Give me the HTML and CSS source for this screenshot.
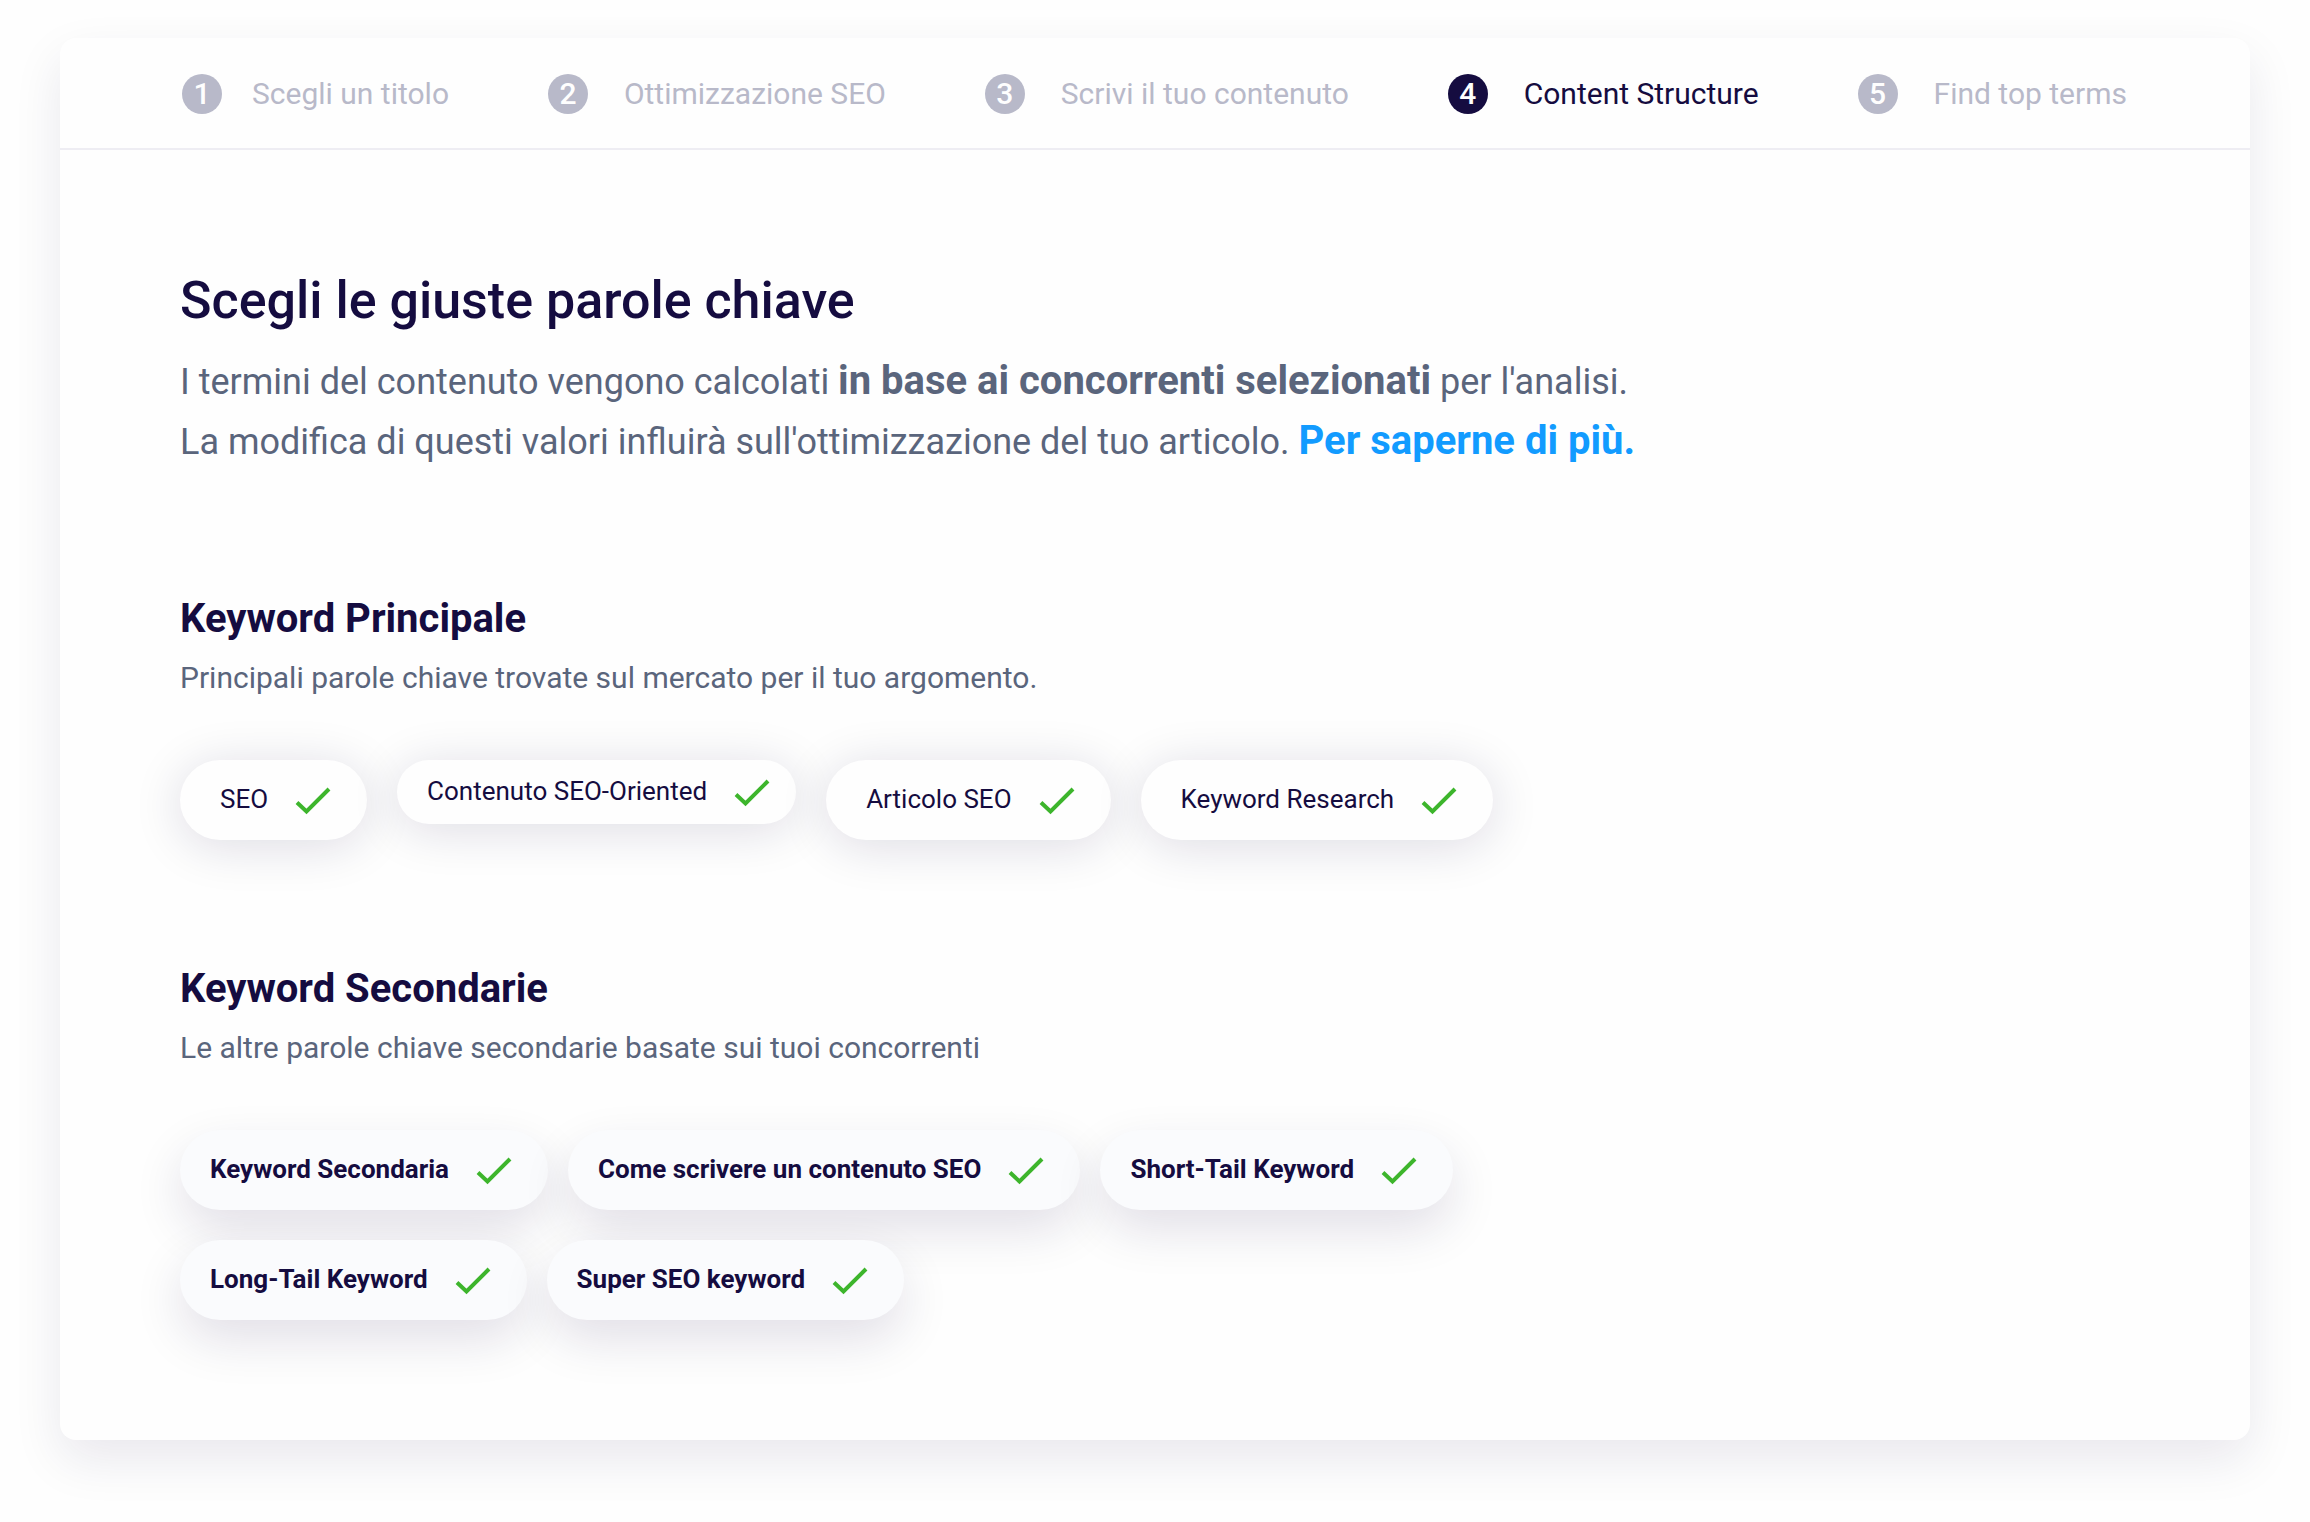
FILE: index.html
```html
<!DOCTYPE html>
<html lang="it">
  <head>
    <meta charset="UTF-8" />
    <meta name="viewport" content="width=device-width, initial-scale=1.0" />
    <title>Content Structure</title>
    <link rel="stylesheet" href="styles.css">
  </head>
  <body>
    <!-- check mark shared by all the keywords -->
    <svg class="sprite" aria-hidden="true">
      <symbol id="check" viewBox="0 0 36 28">
        <path d="M2 15.5 L11.5 24.5 L34 2" />
      </symbol>
    </svg>

    <main class="card">
      <nav class="steps">
        <a href="#titolo" class="step"><span class="number">1</span>Scegli un titolo</a>
        <a href="#seo" class="step"><span class="number">2</span>Ottimizzazione SEO</a>
        <a href="#contenuto" class="step"><span class="number">3</span>Scrivi il tuo contenuto</a>
        <a href="#structure" class="step active" aria-current="step"><span class="number">4</span>Content Structure</a>
        <a href="#terms" class="step"><span class="number">5</span>Find top terms</a>
      </nav>

      <div class="content">
        <h1>Scegli le giuste parole chiave</h1>
        <p class="intro">
          I termini del contenuto vengono calcolati <strong>in base ai concorrenti selezionati</strong> per l'analisi.<br>
          La modifica di questi valori influirà sull'ottimizzazione del tuo articolo. <a href="#info">Per saperne di più.</a>
        </p>

        <section class="group">
          <h2>Keyword Principale</h2>
          <p class="hint">Principali parole chiave trovate sul mercato per il tuo argomento.</p>
          <div class="keywords">
            <button type="button" class="keyword">SEO<svg class="check" aria-hidden="true"><use href="#check" /></svg></button>
            <button type="button" class="keyword small">Contenuto SEO-Oriented<svg class="check" aria-hidden="true"><use href="#check" /></svg></button>
            <button type="button" class="keyword">Articolo SEO<svg class="check" aria-hidden="true"><use href="#check" /></svg></button>
            <button type="button" class="keyword">Keyword Research<svg class="check" aria-hidden="true"><use href="#check" /></svg></button>
          </div>
        </section>

        <section class="group">
          <h2>Keyword Secondarie</h2>
          <p class="hint">Le altre parole chiave secondarie basate sui tuoi concorrenti</p>
          <div class="keywords secondary">
            <button type="button" class="keyword">Keyword Secondaria<svg class="check" aria-hidden="true"><use href="#check" /></svg></button>
            <button type="button" class="keyword">Come scrivere un contenuto SEO<svg class="check" aria-hidden="true"><use href="#check" /></svg></button>
            <button type="button" class="keyword">Short-Tail Keyword<svg class="check" aria-hidden="true"><use href="#check" /></svg></button>
            <button type="button" class="keyword">Long-Tail Keyword<svg class="check" aria-hidden="true"><use href="#check" /></svg></button>
            <button type="button" class="keyword">Super SEO keyword<svg class="check" aria-hidden="true"><use href="#check" /></svg></button>
          </div>
        </section>
      </div>
    </main>
  </body>
</html>
```

FILE: styles.css
```css
* {
  margin: 0;
  padding: 0;
  box-sizing: border-box;
  font-family: "Roboto", sans-serif;
}

body {
  padding: 38px 60px 82px;
  background-color: #fefefe;
  color: #150c40;
}

.sprite {
  display: none;
}

.card {
  background: #fefefe;
  border-radius: 16px;
  box-shadow: 0 20px 50px rgba(21, 12, 64, 0.09);
}

/* Steps */
.steps {
  display: flex;
  justify-content: space-between;
  align-items: center;
  padding: 36px 123px 34px 122px;
  border-bottom: 2px solid #eeedf3;
}

.step {
  display: flex;
  align-items: center;
  gap: 36px;
  font-size: 30px;
  line-height: 40px;
  color: #b8b9c9;
  text-decoration: none;
}

.step:first-child {
  gap: 30px;
}

.step.active {
  color: #150c40;
}

.number {
  width: 40px;
  height: 40px;
  border-radius: 50%;
  background: #b8b9c9;
  color: #fefefe;
  font-weight: 500;
  text-align: center;
}

.active .number {
  background: #150c40;
}

/* Content */
.content {
  padding: 121px 120px 120px;
}

h1 {
  font-size: 52px;
  line-height: 60px;
  font-weight: 500;
}

.intro {
  margin-top: 21px;
  font-size: 36px;
  line-height: 60px;
  color: #5a657c;
}

.intro strong,
.intro a {
  font-size: 40px;
  line-height: 40px;
  font-weight: 700;
}

.intro a {
  color: #129bff;
  text-decoration: none;
}

.group {
  margin-top: 123px;
}

.group + .group {
  margin-top: 125px;
}

h2 {
  font-size: 40px;
  line-height: 48px;
  font-weight: 700;
}

.hint {
  margin-top: 15px;
  font-size: 30px;
  line-height: 40px;
  color: #5a657c;
}

/* Keywords */
.keywords {
  display: flex;
  flex-wrap: wrap;
  align-items: flex-start;
  gap: 30px;
  max-width: 1400px;
  margin-top: 62px;
}

.keyword {
  display: flex;
  align-items: center;
  gap: 27px;
  height: 80px;
  padding: 0 36px 2px 40px;
  border: none;
  border-radius: 40px;
  background: #fefefe;
  box-shadow: 0 6px 50px rgba(21, 12, 64, 0.14);
  color: #150c40;
  font-size: 26px;
  cursor: pointer;
}

.keyword.small {
  height: 64px;
  padding: 0 26px 2px 30px;
}

.check {
  width: 36px;
  height: 28px;
  margin-top: 3px;
  fill: none;
  stroke: #3db52c;
  stroke-width: 4;
}

.secondary {
  gap: 30px 20px;
}

.secondary .keyword {
  padding-left: 30px;
  background: #fafbfd;
  box-shadow: 0 20px 50px rgba(21, 12, 64, 0.12);
  font-weight: 700;
}
```
